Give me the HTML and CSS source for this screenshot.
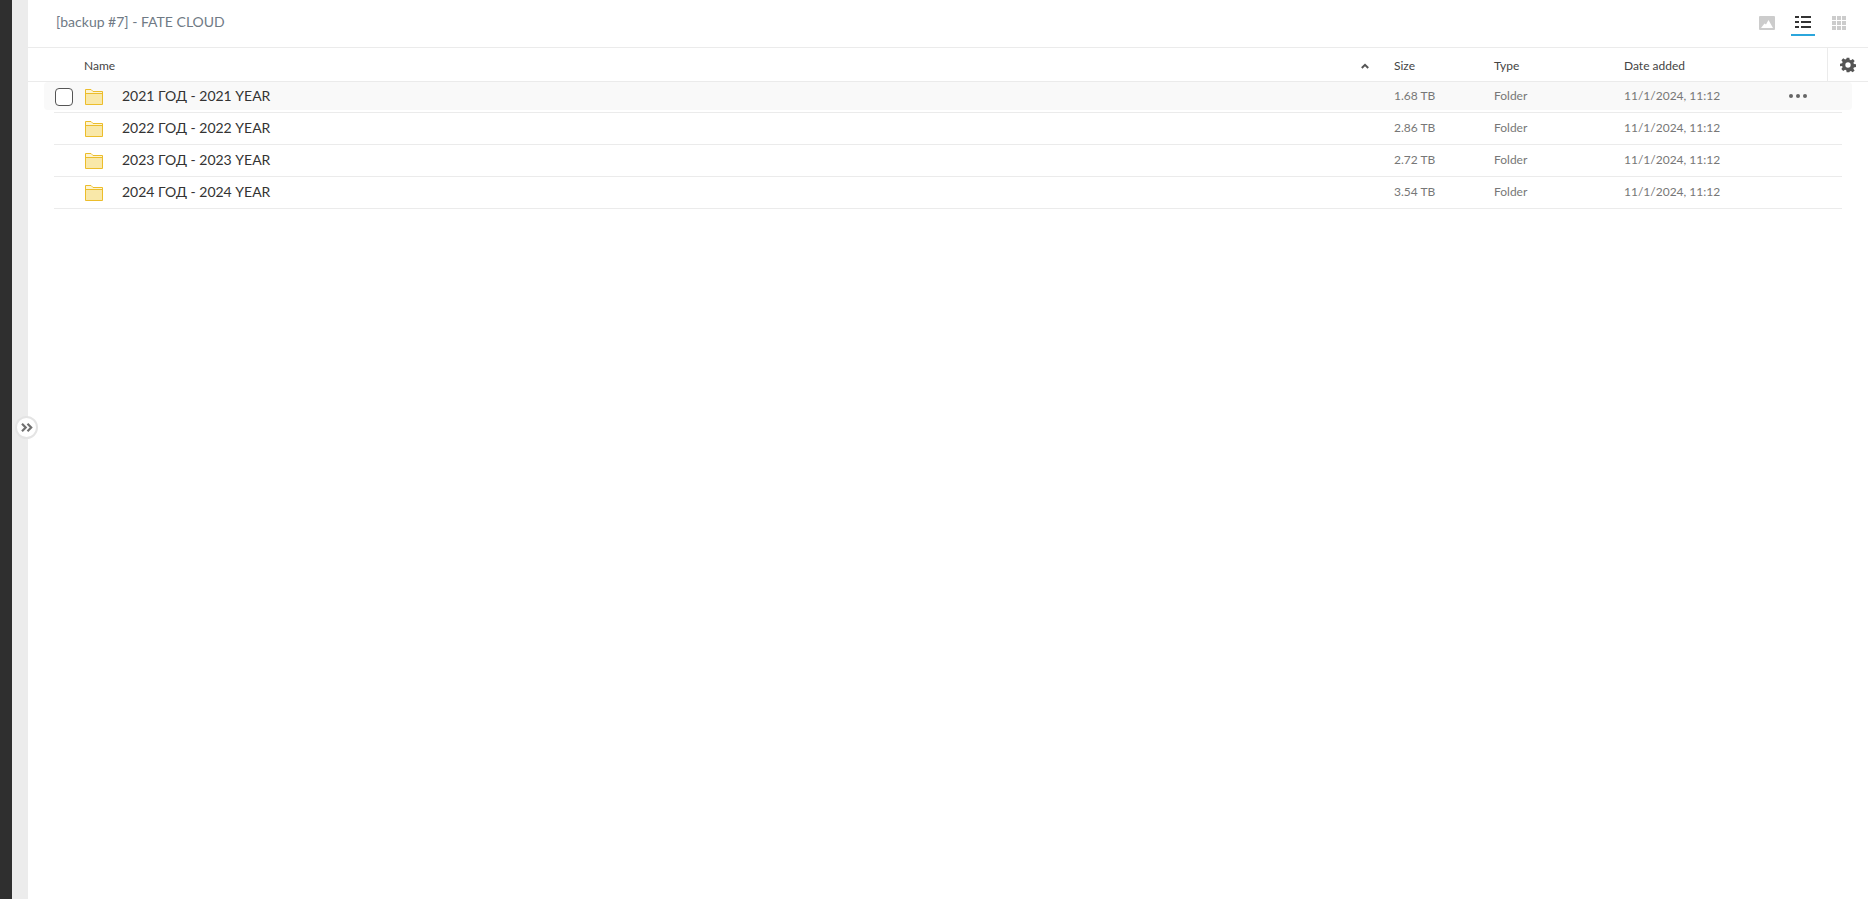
FILE: index.html
```html
<!DOCTYPE html>
<html lang="en">
<head>
    <meta charset="UTF-8">
    <meta name="viewport" content="width=device-width, initial-scale=1.0">
    <title>FATE CLOUD</title>
    <link rel="stylesheet" href="styles.css">
</head>
<body>

<div class="rail"></div>
<div class="gutter">
    <button class="expand-btn" type="button" aria-label="Expand">
        <svg width="12" height="9" viewBox="0 0 12 9"><path d="M1 .8l3.700 3.700L1 8.200M6.500 .8l3.700 3.700-3.700 3.700" fill="none" stroke="#707070" stroke-width="2.200"/></svg>
    </button>
</div>

<div class="main">
    <div class="topbar">
        <div class="title">[backup #7] - FATE CLOUD</div>
        <div class="views">
            <div class="view-btn">
                <svg width="16" height="14" viewBox="0 0 16 14"><rect width="16" height="14" rx="1" fill="#ccc"/><path d="M2 12l3.500-4.500 1.500 1 2.500-4.500 4.500 8z" fill="#fff"/></svg>
            </div>
            <div class="view-btn active">
                <svg width="16" height="12" viewBox="0 0 16 12" fill="#333"><rect width="4" height="2"/><rect x="6" width="10" height="2"/><rect y="5" width="4" height="2"/><rect x="6" y="5" width="10" height="2"/><rect y="10" width="4" height="2"/><rect x="6" y="10" width="10" height="2"/></svg>
            </div>
            <div class="view-btn">
                <svg width="14" height="14" viewBox="0 0 14 14" fill="#ccc"><rect width="4" height="4"/><rect x="5" width="4" height="4"/><rect x="10" width="4" height="4"/><rect y="5" width="4" height="4"/><rect x="5" y="5" width="4" height="4"/><rect x="10" y="5" width="4" height="4"/><rect y="10" width="4" height="4"/><rect x="5" y="10" width="4" height="4"/><rect x="10" y="10" width="4" height="4"/></svg>
            </div>
        </div>
    </div>

    <div class="table-head">
        <div class="head-cols">
            <div class="col-name">Name</div>
            <div class="col-sort">
                <svg width="8" height="6" viewBox="0 0 8 6"><path d="M.8 5l3.200-3.200L7.200 5" fill="none" stroke="#555" stroke-width="2"/></svg>
            </div>
            <div>Size</div>
            <div>Type</div>
            <div>Date added</div>
        </div>
        <div class="settings">
            <svg width="16" height="16" viewBox="0 0 24 24"><path fill="#555" fill-rule="evenodd" d="M10 1h4l.6 3.200 1.900.8 2.700-1.900 2.800 2.800-1.900 2.700.8 1.900 3.100.5v4l-3.200.6-.8 1.900 1.900 2.700-2.800 2.800-2.700-1.900-1.900.8L14 23h-4l-.6-3.200-1.900-.8-2.700 1.900-2.800-2.800 1.900-2.700-.8-1.900L0 14v-4l3.200-.6.800-1.900-1.900-2.700 2.800-2.800 2.700 1.900 1.900-.8zM12 8a4 4 0 1 0 0 8 4 4 0 0 0 0-8z"/></svg>
        </div>
    </div>

    <div class="rows">
        <div class="row">
            <div class="row-inner hovered">
                <span class="check"></span>
                <svg class="folder" width="18" height="16" viewBox="0 0 18 16"><path d="M.5 15.500V.500h5.500l2 2h9.500v13z" fill="#f9e8a9" stroke="#ecbd2b"/><path d="M1 1h4.800l2 2H17v1.500H1z" fill="#fdf4d2"/><path d="M.5 4.500h17" stroke="#ecbd2b"/></svg>
                <div class="name">2021 ГОД - 2021 YEAR</div>
                <div class="cell">1.68 TB</div>
                <div class="cell">Folder</div>
                <div class="cell">11/1/2024, 11:12</div>
                <div class="more"><i></i><i></i><i></i></div>
            </div>
        </div>
        <div class="row">
            <div class="row-inner">
                <span class="check-space"></span>
                <svg class="folder" width="18" height="16" viewBox="0 0 18 16"><path d="M.5 15.500V.500h5.500l2 2h9.500v13z" fill="#f9e8a9" stroke="#ecbd2b"/><path d="M1 1h4.800l2 2H17v1.500H1z" fill="#fdf4d2"/><path d="M.5 4.500h17" stroke="#ecbd2b"/></svg>
                <div class="name">2022 ГОД - 2022 YEAR</div>
                <div class="cell">2.86 TB</div>
                <div class="cell">Folder</div>
                <div class="cell">11/1/2024, 11:12</div>
            </div>
        </div>
        <div class="row">
            <div class="row-inner">
                <span class="check-space"></span>
                <svg class="folder" width="18" height="16" viewBox="0 0 18 16"><path d="M.5 15.500V.500h5.500l2 2h9.500v13z" fill="#f9e8a9" stroke="#ecbd2b"/><path d="M1 1h4.800l2 2H17v1.500H1z" fill="#fdf4d2"/><path d="M.5 4.500h17" stroke="#ecbd2b"/></svg>
                <div class="name">2023 ГОД - 2023 YEAR</div>
                <div class="cell">2.72 TB</div>
                <div class="cell">Folder</div>
                <div class="cell">11/1/2024, 11:12</div>
            </div>
        </div>
        <div class="row">
            <div class="row-inner">
                <span class="check-space"></span>
                <svg class="folder" width="18" height="16" viewBox="0 0 18 16"><path d="M.5 15.500V.500h5.500l2 2h9.500v13z" fill="#f9e8a9" stroke="#ecbd2b"/><path d="M1 1h4.800l2 2H17v1.500H1z" fill="#fdf4d2"/><path d="M.5 4.500h17" stroke="#ecbd2b"/></svg>
                <div class="name">2024 ГОД - 2024 YEAR</div>
                <div class="cell">3.54 TB</div>
                <div class="cell">Folder</div>
                <div class="cell">11/1/2024, 11:12</div>
            </div>
        </div>
    </div>
</div>

</body>
</html>
```

FILE: styles.css
```css
html, body {
    height: 100%;
}

body {
    font-family: Lato, "Open Sans", sans-serif;
    background-color: #fff;
    display: flex;
    margin: 0;
    overflow: hidden;
}

.rail {
    width: 12px;
    background-color: #2f2f2f;
}

.gutter {
    position: relative;
    width: 16px;
    background-color: #ececec;
}

.expand-btn {
    position: absolute;
    left: 3px;
    top: 416px;
    width: 23px;
    height: 23px;
    padding: 0;
    display: flex;
    align-items: center;
    justify-content: center;
    background-color: #fff;
    border: 2px solid #e4e4e4;
    border-radius: 50%;
}

.main {
    flex: 1;
    min-width: 0;
}

.topbar {
    height: 47px;
    display: flex;
    justify-content: space-between;
    padding: 0 17px 0 28px;
    border-bottom: 1px solid #ebebeb;
}

.title {
    font-size: 14px;
    line-height: 44px;
    color: #6f7a85;
}

.views {
    display: flex;
    gap: 12px;
    height: 26px;
    padding-top: 10px;
}

.view-btn {
    width: 24px;
    height: 26px;
    box-sizing: border-box;
    display: flex;
    align-items: flex-start;
    justify-content: center;
    padding-top: 6px;
    border-bottom: 2px solid transparent;
}

.view-btn.active {
    border-bottom-color: #2ba6dc;
}

.table-head {
    height: 33px;
    display: flex;
    border-bottom: 1px solid #ebebeb;
}

.head-cols {
    flex: 1;
    display: grid;
    grid-template-columns: 1270px 40px 100px 130px 1fr;
    align-items: center;
    padding: 2px 0 0 56px;
    font-size: 12px;
    color: #444;
}

.col-sort {
    display: flex;
    padding-left: 7px;
}

.settings {
    width: 40px;
    display: flex;
    align-items: center;
    justify-content: center;
    border-left: 1px solid #ebebeb;
}

.rows {
    margin: -1px 26px 0 26px;
}

.row {
    height: 30px;
    padding-top: 1px;
    border-bottom: 1px solid #ebebeb;
}

.row-inner {
    height: 28px;
    margin: 0 -10px;
    padding: 0 10px 0 11px;
    display: flex;
    align-items: center;
    border-radius: 4px;
}

.hovered {
    background-color: #f9f9f9;
}

.check {
    width: 18px;
    height: 18px;
    box-sizing: border-box;
    margin: 2px 12px 0 0;
    border: 1px solid #555;
    border-radius: 4px;
    background-color: #fff;
}

.check-space {
    width: 18px;
    margin-right: 12px;
}

.folder {
    margin: 2px 19px 0 0;
}

.name {
    width: 1272px;
    padding-bottom: 2px;
    font-size: 14px;
    color: #333;
}

.cell {
    padding-bottom: 2px;
    font-size: 12px;
    color: #777;
}

.cell:nth-of-type(2) {
    width: 100px;
}

.cell:nth-of-type(3) {
    width: 130px;
}

.cell:nth-of-type(4) {
    width: 165px;
}

.more {
    display: flex;
    gap: 3px;
}

.more i {
    width: 4px;
    height: 4px;
    border-radius: 50%;
    background-color: #666;
}
```
